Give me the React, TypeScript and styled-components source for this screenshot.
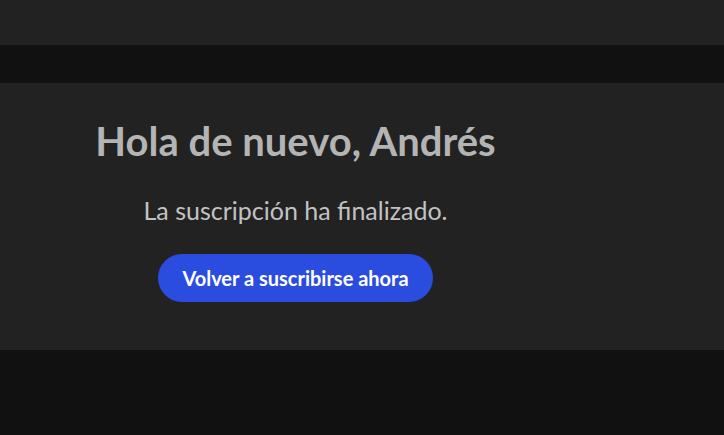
import styled, { createGlobalStyle } from "styled-components";

const GlobalStyle = createGlobalStyle`
    html, body {
        margin: 0;
        padding: 0;
        background: #111111;
        font-family: Lato, "Open Sans", sans-serif;
    }
`

export const App = () => {
    return (
        <>
            <GlobalStyle/>
            <Page>
                <TopBar/>
                <Gap/>
                <Panel>
                    <Content>
                        <Title>Hola de nuevo, Andrés</Title>
                        <Text>La suscripción ha finalizado.</Text>
                        <Button type="button">Volver a suscribirse ahora</Button>
                    </Content>
                </Panel>
            </Page>
        </>
    );
};

export default App;

const Page = styled.div`
    width: 724px;
    height: 435px;
    background-color: #111111;
    display: flex;
    flex-direction: column;
`

const TopBar = styled.div`
    height: 45px;
    background-color: #222222;
`

const Gap = styled.div`
    height: 38px;
`

const Panel = styled.div`
    height: 267px;
    background-color: #222222;
`

const Content = styled.div`
    width: 591px;
    display: flex;
    flex-direction: column;
    align-items: center;
`

const Title = styled.h1`
    margin: 34px 0 0;
    font-size: 40px;
    line-height: 48px;
    font-weight: 700;
    color: #b4b4b4;
`

const Text = styled.p`
    margin: 30px 0 0;
    font-size: 25px;
    line-height: 30px;
    font-weight: 400;
    color: #c2c2c2;
`

const Button = styled.button`
    margin-top: 29px;
    width: 275px;
    height: 48px;
    border: none;
    border-radius: 24px;
    background-color: #2b4ddf;
    color: #ffffff;
    font-family: Lato, "Open Sans", sans-serif;
    font-size: 20px;
    font-weight: 700;
    cursor: pointer;
`
